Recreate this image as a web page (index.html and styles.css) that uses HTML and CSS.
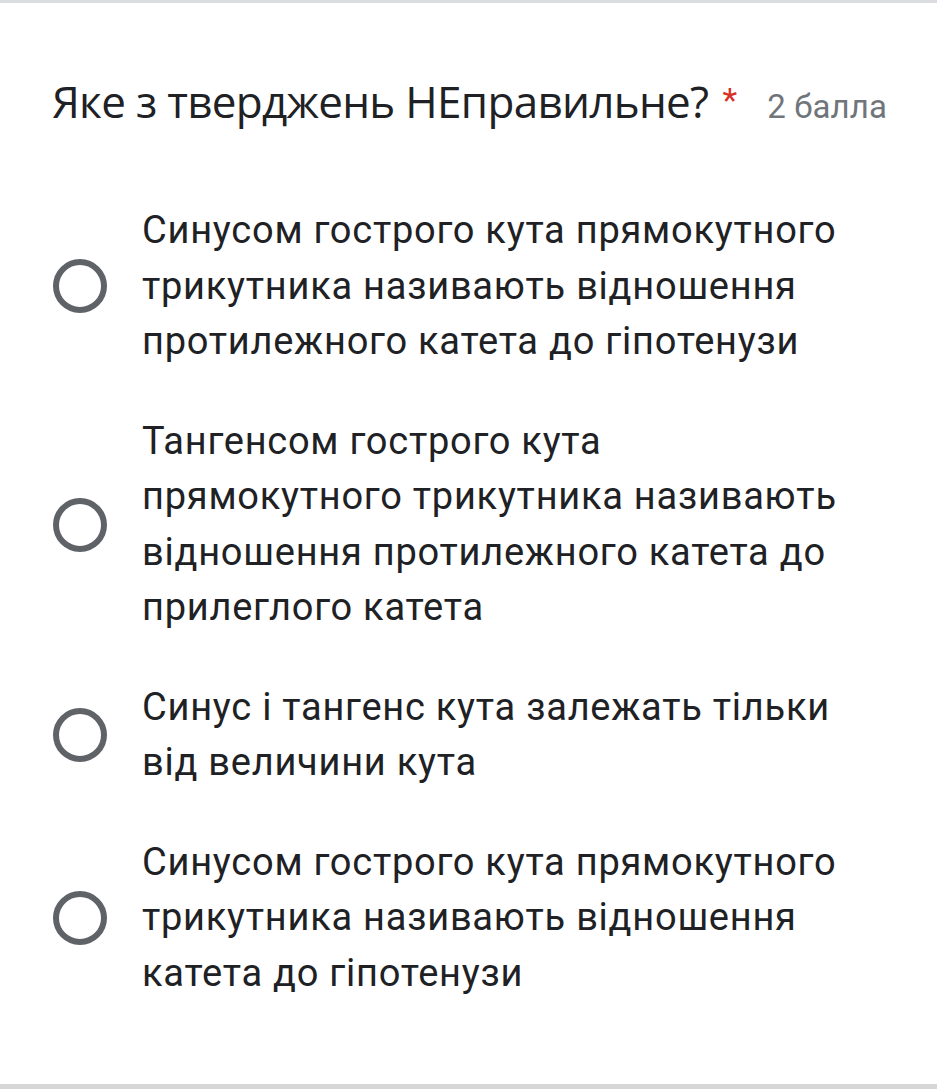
FILE: index.html
```html
<!DOCTYPE html>
<html lang="uk">
<head>
<meta charset="utf-8">
<link rel="stylesheet" href="styles.css">
</head>
<body>
<div class="card">
  <div class="title-row">
    <span class="title">Яке з тверджень НЕправильне?</span>
    <span class="req">*</span>
    <span class="points">2 балла</span>
  </div>
  <div class="options">
    <div class="option"><span class="radio"></span><span class="text">Синусом гострого кута прямокутного трикутника називають відношення протилежного катета до гіпотенузи</span></div>
    <div class="option"><span class="radio"></span><span class="text">Тангенсом гострого кута прямокутного трикутника називають відношення протилежного катета до прилеглого катета</span></div>
    <div class="option"><span class="radio"></span><span class="text">Синус і тангенс кута залежать тільки від величини кута</span></div>
    <div class="option"><span class="radio"></span><span class="text">Синусом гострого кута прямокутного трикутника називають відношення катета до гіпотенузи</span></div>
  </div>
</div>
</body>
</html>
```
FILE: styles.css
```css
html, body {
  margin: 0;
  padding: 0;
  background: #ffffff;
}
.card {
  box-sizing: border-box;
  height: 1089px;
  border-top: 3px solid #dadce0;
  border-bottom: 5px solid #d6d6d6;
  padding: 68px 50px 0 52px;
  font-family: Roboto, "Noto Sans", sans-serif;
  color: #202124;
}
.title-row {
  display: flex;
  align-items: baseline;
}
.title {
  font-family: "Open Sans", Roboto, sans-serif;
  font-size: 44px;
  line-height: 60px;
  color: #202124;
  letter-spacing: -0.7px;
}
.req {
  color: #d93025;
  font-size: 34px;
  margin-left: 14px;
  position: relative;
  top: -6px;
}
.points {
  margin-left: auto;
  font-size: 33px;
  color: #70757a;
  letter-spacing: 0.1px;
}
.options {
  display: flex;
  flex-direction: column;
  gap: 44px;
  margin-top: 72px;
}
.option {
  display: flex;
  align-items: center;
  padding-right: 44px;
}
.radio {
  flex: none;
  box-sizing: border-box;
  width: 54px;
  height: 54px;
  border: 6.5px solid #5f6368;
  border-radius: 50%;
  margin-left: 1px;
}
.text {
  margin-left: 35px;
  font-size: 38px;
  line-height: 55.5px;
  color: #202124;
  letter-spacing: 0.75px;
}
```
